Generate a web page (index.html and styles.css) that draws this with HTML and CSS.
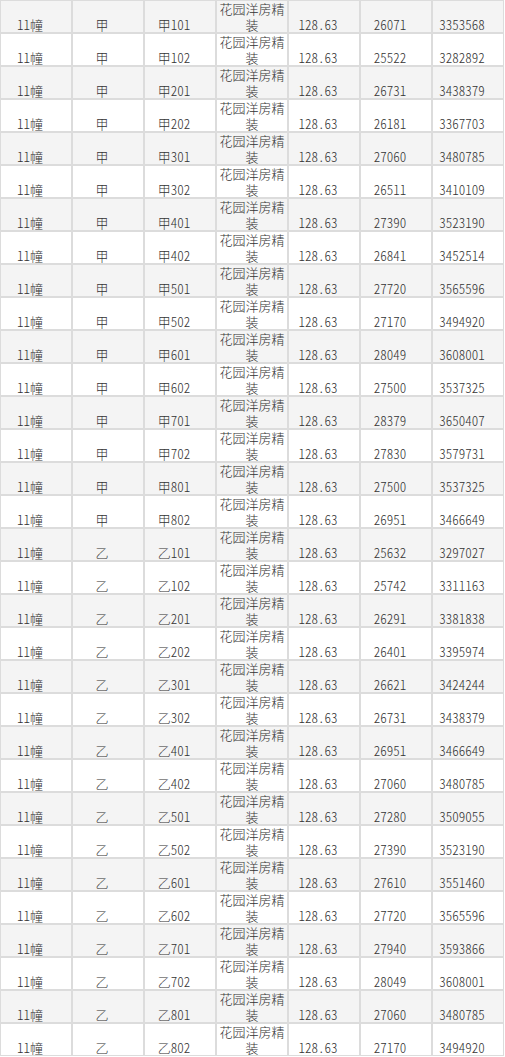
FILE: index.html
```html
<!DOCTYPE html>
<html lang="zh-CN">
<head>
<meta charset="utf-8">
<title>房源价格表</title>
<link rel="stylesheet" href="styles.css">
</head>
<body>
<table class="price-table">
<tbody>
<tr><td>11幢</td><td>甲</td><td>甲101</td><td class="type">花园洋房精装</td><td>128.63</td><td>26071</td><td>3353568</td></tr>
<tr><td>11幢</td><td>甲</td><td>甲102</td><td class="type">花园洋房精装</td><td>128.63</td><td>25522</td><td>3282892</td></tr>
<tr><td>11幢</td><td>甲</td><td>甲201</td><td class="type">花园洋房精装</td><td>128.63</td><td>26731</td><td>3438379</td></tr>
<tr><td>11幢</td><td>甲</td><td>甲202</td><td class="type">花园洋房精装</td><td>128.63</td><td>26181</td><td>3367703</td></tr>
<tr><td>11幢</td><td>甲</td><td>甲301</td><td class="type">花园洋房精装</td><td>128.63</td><td>27060</td><td>3480785</td></tr>
<tr><td>11幢</td><td>甲</td><td>甲302</td><td class="type">花园洋房精装</td><td>128.63</td><td>26511</td><td>3410109</td></tr>
<tr><td>11幢</td><td>甲</td><td>甲401</td><td class="type">花园洋房精装</td><td>128.63</td><td>27390</td><td>3523190</td></tr>
<tr><td>11幢</td><td>甲</td><td>甲402</td><td class="type">花园洋房精装</td><td>128.63</td><td>26841</td><td>3452514</td></tr>
<tr><td>11幢</td><td>甲</td><td>甲501</td><td class="type">花园洋房精装</td><td>128.63</td><td>27720</td><td>3565596</td></tr>
<tr><td>11幢</td><td>甲</td><td>甲502</td><td class="type">花园洋房精装</td><td>128.63</td><td>27170</td><td>3494920</td></tr>
<tr><td>11幢</td><td>甲</td><td>甲601</td><td class="type">花园洋房精装</td><td>128.63</td><td>28049</td><td>3608001</td></tr>
<tr><td>11幢</td><td>甲</td><td>甲602</td><td class="type">花园洋房精装</td><td>128.63</td><td>27500</td><td>3537325</td></tr>
<tr><td>11幢</td><td>甲</td><td>甲701</td><td class="type">花园洋房精装</td><td>128.63</td><td>28379</td><td>3650407</td></tr>
<tr><td>11幢</td><td>甲</td><td>甲702</td><td class="type">花园洋房精装</td><td>128.63</td><td>27830</td><td>3579731</td></tr>
<tr><td>11幢</td><td>甲</td><td>甲801</td><td class="type">花园洋房精装</td><td>128.63</td><td>27500</td><td>3537325</td></tr>
<tr><td>11幢</td><td>甲</td><td>甲802</td><td class="type">花园洋房精装</td><td>128.63</td><td>26951</td><td>3466649</td></tr>
<tr><td>11幢</td><td>乙</td><td>乙101</td><td class="type">花园洋房精装</td><td>128.63</td><td>25632</td><td>3297027</td></tr>
<tr><td>11幢</td><td>乙</td><td>乙102</td><td class="type">花园洋房精装</td><td>128.63</td><td>25742</td><td>3311163</td></tr>
<tr><td>11幢</td><td>乙</td><td>乙201</td><td class="type">花园洋房精装</td><td>128.63</td><td>26291</td><td>3381838</td></tr>
<tr><td>11幢</td><td>乙</td><td>乙202</td><td class="type">花园洋房精装</td><td>128.63</td><td>26401</td><td>3395974</td></tr>
<tr><td>11幢</td><td>乙</td><td>乙301</td><td class="type">花园洋房精装</td><td>128.63</td><td>26621</td><td>3424244</td></tr>
<tr><td>11幢</td><td>乙</td><td>乙302</td><td class="type">花园洋房精装</td><td>128.63</td><td>26731</td><td>3438379</td></tr>
<tr><td>11幢</td><td>乙</td><td>乙401</td><td class="type">花园洋房精装</td><td>128.63</td><td>26951</td><td>3466649</td></tr>
<tr><td>11幢</td><td>乙</td><td>乙402</td><td class="type">花园洋房精装</td><td>128.63</td><td>27060</td><td>3480785</td></tr>
<tr><td>11幢</td><td>乙</td><td>乙501</td><td class="type">花园洋房精装</td><td>128.63</td><td>27280</td><td>3509055</td></tr>
<tr><td>11幢</td><td>乙</td><td>乙502</td><td class="type">花园洋房精装</td><td>128.63</td><td>27390</td><td>3523190</td></tr>
<tr><td>11幢</td><td>乙</td><td>乙601</td><td class="type">花园洋房精装</td><td>128.63</td><td>27610</td><td>3551460</td></tr>
<tr><td>11幢</td><td>乙</td><td>乙602</td><td class="type">花园洋房精装</td><td>128.63</td><td>27720</td><td>3565596</td></tr>
<tr><td>11幢</td><td>乙</td><td>乙701</td><td class="type">花园洋房精装</td><td>128.63</td><td>27940</td><td>3593866</td></tr>
<tr><td>11幢</td><td>乙</td><td>乙702</td><td class="type">花园洋房精装</td><td>128.63</td><td>28049</td><td>3608001</td></tr>
<tr><td>11幢</td><td>乙</td><td>乙801</td><td class="type">花园洋房精装</td><td>128.63</td><td>27060</td><td>3480785</td></tr>
<tr><td>11幢</td><td>乙</td><td>乙802</td><td class="type">花园洋房精装</td><td>128.63</td><td>27170</td><td>3494920</td></tr>
</tbody>
</table>
</body>
</html>
```

FILE: styles.css
```css
html, body {
  margin: 0;
  padding: 0;
  background: #ffffff;
}

.price-table {
  width: 504px;
  table-layout: fixed;
  border-collapse: separate;
  border-spacing: 0;
  font-family: "Noto Sans CJK SC", sans-serif;
  font-size: 13px;
  font-weight: 300;
  font-feature-settings: "hwid" 1;
  line-height: 15.5px;
  color: #333333;
}

.price-table td {
  box-sizing: border-box;
  width: 72px;
  height: 33px;
  border: 1px solid #dcdcdc;
  padding: 0 12px 0 0;
  text-align: center;
  vertical-align: bottom;
  white-space: nowrap;
}

.price-table td.type {
  padding: 0;
  white-space: normal;
}

.price-table tr:nth-child(odd) td {
  background: #f4f4f4;
}
```
